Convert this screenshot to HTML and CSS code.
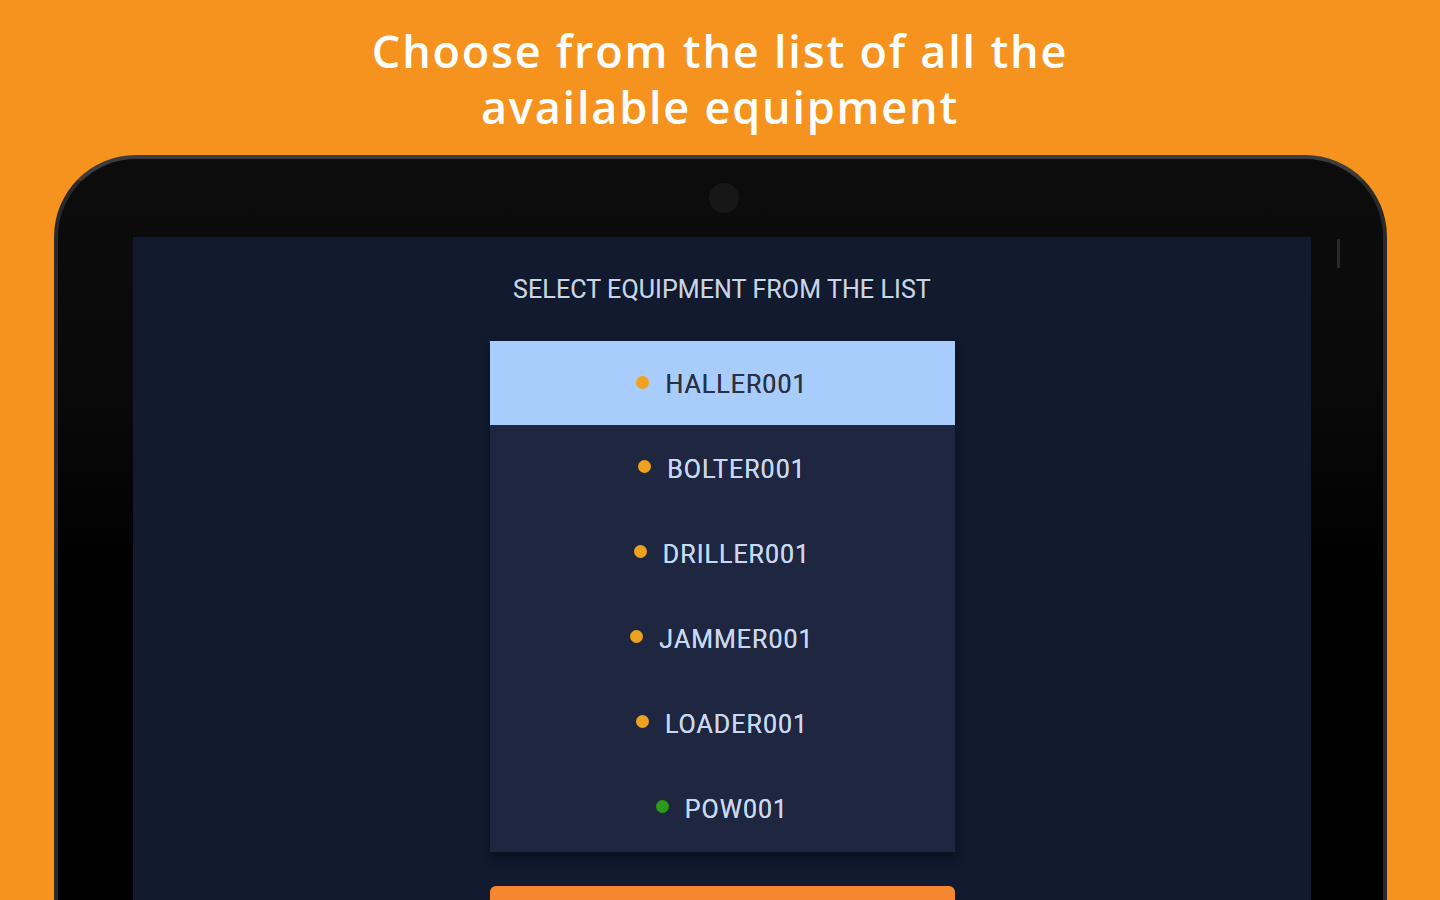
FILE: index.html
```html
<!DOCTYPE html>
<html lang="en">
<head>
<meta charset="utf-8">
<title>Select equipment</title>
<link rel="stylesheet" href="styles.css">
</head>
<body>
<div class="page">
  <h1 class="headline">Choose from the list of all the<br>available equipment</h1>
  <div class="tablet">
    <div class="bezel-top"><span class="camera"></span></div>
    <span class="sensor"></span>
    <div class="screen">
      <div class="screen-title">SELECT EQUIPMENT FROM THE LIST</div>
      <ul class="equip-list">
        <li class="equip-item selected"><span class="dot orange"></span><span class="name">HALLER001</span></li>
        <li class="equip-item"><span class="dot orange"></span><span class="name">BOLTER001</span></li>
        <li class="equip-item"><span class="dot orange"></span><span class="name">DRILLER001</span></li>
        <li class="equip-item"><span class="dot orange"></span><span class="name">JAMMER001</span></li>
        <li class="equip-item"><span class="dot orange"></span><span class="name">LOADER001</span></li>
        <li class="equip-item"><span class="dot green"></span><span class="name">POW001</span></li>
      </ul>
      <div class="action-button"></div>
    </div>
  </div>
</div>
</body>
</html>
```
FILE: styles.css
```css
html, body {
  margin: 0;
  padding: 0;
}
body {
  width: 1440px;
  height: 900px;
  overflow: hidden;
  background: #f5931e;
  font-family: "Open Sans", Arial, sans-serif;
}
.page {
  display: flex;
  flex-direction: column;
  align-items: flex-start;
}
.headline {
  align-self: stretch;
  margin: 23px 0 0;
  text-align: center;
  color: #ffffff;
  font-family: "Open Sans", sans-serif;
  font-weight: 600;
  font-size: 45px;
  line-height: 56px;
  letter-spacing: 1.8px;
  height: 132px;
}
.tablet {
  position: relative;
  margin-left: 54px;
  width: 1333px;
  height: 760px;
  border: 4px solid #2a2a2c;
  border-top-color: #3c3c3e;
  border-radius: 82px 82px 0 0;
  background: linear-gradient(#0c0c0c 0, #0a0a0a 220px, #000 420px);
  padding: 0 72px 0 75px;
  box-sizing: border-box;
}
.bezel-top {
  height: 78px;
  display: flex;
  align-items: center;
  justify-content: center;
}
.camera {
  width: 30px;
  height: 30px;
  border-radius: 50%;
  background: #171717;
  margin-left: 3px;
}
.sensor {
  position: absolute;
  right: 43px;
  top: 80px;
  width: 3px;
  height: 29px;
  background: #2a2a2a;
  border-radius: 1px;
}
.screen {
  background: #111a2e;
  height: 700px;
  display: flex;
  flex-direction: column;
  align-items: center;
}
.screen-title {
  margin-top: 40px;
  font-family: Roboto, sans-serif;
  font-size: 25px;
  letter-spacing: 0.1px;
  color: #c9d6ea;
  line-height: 26px;
  text-shadow: 0 0 1px #000, 0 0 0.5px #c9d6ea;
}
.equip-list {
  list-style: none;
  margin: 38px 0 0;
  padding: 0 0 2px;
  width: 465px;
  background: #1f2740;
  box-shadow: 0 6px 8px rgba(6, 10, 22, 0.6);
}
.equip-item {
  height: 85px;
  box-sizing: border-box;
  padding-top: 3px;
  display: flex;
  align-items: center;
  justify-content: center;
  gap: 16px;
  font-family: Roboto, sans-serif;
  font-size: 25px;
  color: #c7d8f2;
  letter-spacing: 1px;
  text-shadow: 0 0 0.5px currentColor;
}
.equip-item.selected {
  height: 84px;
  background: #a8cdfd;
  color: #2a3142;
}
.dot {
  width: 13px;
  height: 13px;
  border-radius: 50%;
  margin-top: -5px;
}
.dot.orange { background: #eea21d; }
.dot.green { background: #2c9a1c; }
.action-button {
  margin-top: 34px;
  width: 465px;
  height: 60px;
  background: #f6862f;
  border-radius: 6px 6px 0 0;
}
```
